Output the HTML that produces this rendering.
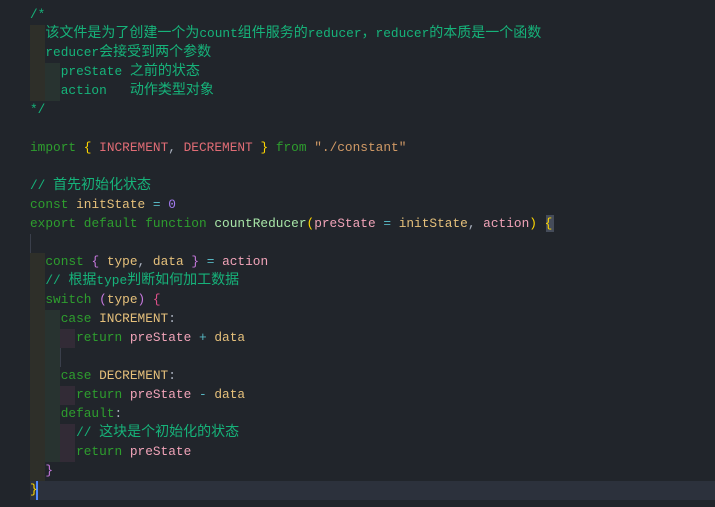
<!DOCTYPE html>
<html><head><meta charset="utf-8"><style>
html,body{margin:0;padding:0;}
body{width:715px;height:507px;background:#21252b;overflow:hidden;position:relative;font-family:"Liberation Mono","Noto Sans CJK SC",monospace;font-size:12.8px;}
.l{position:absolute;left:30px;height:19px;line-height:19px;white-space:pre;color:#abb2bf;}
.z{font-size:14px;line-height:19px;}
.c{color:#16b37a}.k{color:#2e9e2e}.v{color:#f0a3b8}.o{color:#e5c07b}.r{color:#e06c75}.s{color:#d19a66}.y{color:#ffd700}.p{color:#c678dd}.n{color:#a37bf0}.op{color:#56b6c2}.f{color:#a8e6a8}
.g{position:absolute;}
</style></head><body>
<div class="g" style="left:30px;top:25px;width:15px;height:76px;background:#2e2f29"></div>
<div class="g" style="left:45px;top:63px;width:15px;height:38px;background:#283330"></div>
<div class="g" style="left:30px;top:253px;width:15px;height:228px;background:#2e2f29"></div>
<div class="g" style="left:45px;top:310px;width:15px;height:152px;background:#283330"></div>
<div class="g" style="left:60px;top:329px;width:15px;height:19px;background:#322b36"></div>
<div class="g" style="left:60px;top:348px;width:1px;height:19px;background:#3a3f4b"></div>
<div class="g" style="left:60px;top:386px;width:15px;height:19px;background:#322b36"></div>
<div class="g" style="left:60px;top:424px;width:15px;height:38px;background:#322b36"></div>
<div class="g" style="left:30px;top:234px;width:1px;height:19px;background:#3a3f4b"></div>
<div class="g" style="left:30px;top:481px;width:685px;height:19px;background:#2c313c"></div>
<div class="g" style="left:36px;top:481px;width:2px;height:19px;background:#528bff"></div>
<div class="g" style="left:546px;top:215px;width:8px;height:17px;background:#454c5a"></div>

<div class="l c" style="top:5px">/*</div>
<div class="l c" style="top:24px">  <span class="z">该文件是为了创建一个为</span>count<span class="z">组件服务的</span>reducer<span class="z">，</span>reducer<span class="z">的本质是一个函数</span></div>
<div class="l c" style="top:43px">  reducer<span class="z">会接受到两个参数</span></div>
<div class="l c" style="top:62px">    preState <span class="z">之前的状态</span></div>
<div class="l c" style="top:81px">    action   <span class="z">动作类型对象</span></div>
<div class="l c" style="top:100px">*/</div>
<div class="l" style="top:138px"><span class="k">import</span> <span class="y">{</span> <span class="r">INCREMENT</span>, <span class="r">DECREMENT</span> <span class="y">}</span> <span class="k">from</span> <span class="s">"./constant"</span></div>
<div class="l c" style="top:176px">// <span class="z">首先初始化状态</span></div>
<div class="l" style="top:195px"><span class="k">const</span> <span class="o">initState</span> <span class="op">=</span> <span class="n">0</span></div>
<div class="l" style="top:214px"><span class="k">export</span> <span class="k">default</span> <span class="k">function</span> <span class="f">countReducer</span><span class="y">(</span><span class="v">preState</span> <span class="op">=</span> <span class="o">initState</span>, <span class="v">action</span><span class="y">)</span> <span class="y">{</span></div>
<div class="l" style="top:252px">  <span class="k">const</span> <span class="p">{</span> <span class="o">type</span>, <span class="o">data</span> <span class="p">}</span> <span class="op">=</span> <span class="v">action</span></div>
<div class="l c" style="top:271px">  // <span class="z">根据</span>type<span class="z">判断如何加工数据</span></div>
<div class="l" style="top:290px">  <span class="k">switch</span> <span class="p">(</span><span class="o">type</span><span class="p">)</span> <span class="p" style="color:#e0508a">{</span></div>
<div class="l" style="top:309px">    <span class="k">case</span> <span class="o">INCREMENT</span>:</div>
<div class="l" style="top:328px">      <span class="k">return</span> <span class="v">preState</span> <span class="op">+</span> <span class="o">data</span></div>
<div class="l" style="top:366px">    <span class="k">case</span> <span class="o">DECREMENT</span>:</div>
<div class="l" style="top:385px">      <span class="k">return</span> <span class="v">preState</span> <span class="op">-</span> <span class="o">data</span></div>
<div class="l" style="top:404px">    <span class="k">default</span>:</div>
<div class="l c" style="top:423px">      // <span class="z">这块是个初始化的状态</span></div>
<div class="l" style="top:442px">      <span class="k">return</span> <span class="v">preState</span></div>
<div class="l" style="top:461px">  <span class="p">}</span></div>
<div class="l" style="top:480px"><span class="y">}</span></div>
</body></html>
